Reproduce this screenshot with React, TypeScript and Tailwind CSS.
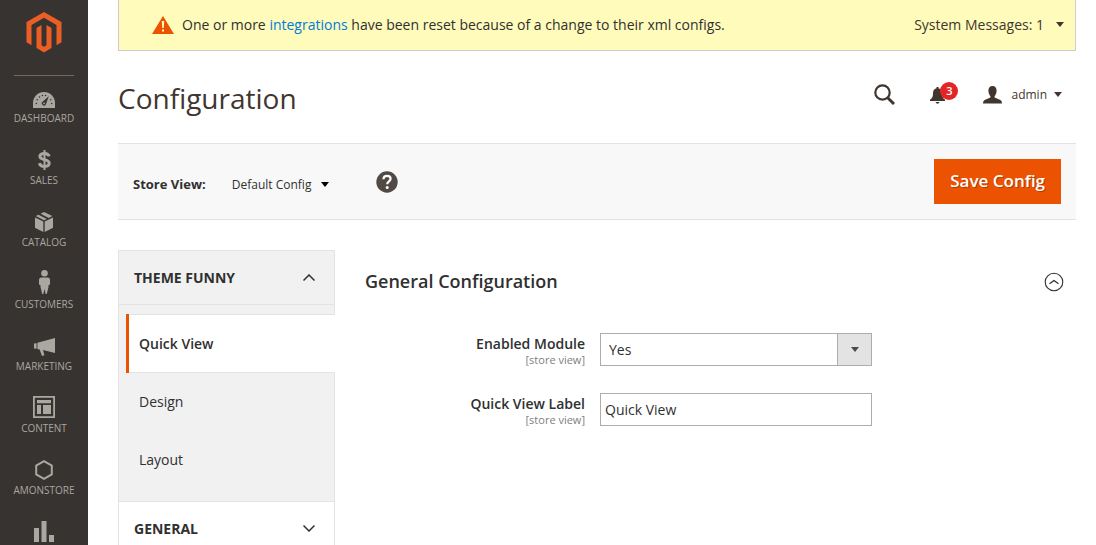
import React from "react";

type MenuItem = { label: string; icon: React.ReactNode; iconOnly?: boolean };

const menu: MenuItem[] = [
  {
    label: "Dashboard",
    icon: (
      <svg width="22" height="16" viewBox="0 0 22 16" fill="currentColor">
        <path d="M0 16V11A11 11 0 0 1 22 11V16Z" />
        <g fill="#373330">
          <circle cx="3.3" cy="11.5" r="0.8" />
          <circle cx="4.2" cy="7.8" r="0.8" />
          <circle cx="6.5" cy="5" r="0.8" />
          <circle cx="9.4" cy="3.5" r="0.8" />
          <circle cx="12.6" cy="3.5" r="0.8" />
          <circle cx="17.8" cy="7.8" r="0.8" />
          <circle cx="18.7" cy="11.5" r="0.8" />
          <path d="M15.8 4.2 12.9 12.2A2.1 2.1 0 1 1 9.6 9.8Z" />
        </g>
        <circle cx="11" cy="11.3" r="0.9" />
      </svg>
    ),
  },
  {
    label: "Sales",
    icon: (
      <svg width="13" height="20" viewBox="0 0 13 20" fill="none" stroke="currentColor">
        <path d="M11.2 6.4C10.6 4.4 8.9 3.5 6.5 3.5C3.7 3.5 1.9 4.7 1.9 6.6C1.9 10.7 11.2 8.6 11.2 13.1C11.2 15.4 9.3 16.5 6.6 16.5C3.8 16.5 2 15.4 1.4 13.1" strokeWidth="3" />
        <path d="M6.5 0V20" strokeWidth="2" />
      </svg>
    ),
  },
  {
    label: "Catalog",
    icon: (
      <svg width="18" height="20" viewBox="0 0 18 20" fill="currentColor">
        <path d="M0 5.6 8.3 9.5V20L0 15.8Z" />
        <path d="M18 5.6 9.7 9.5V20L18 15.8Z" />
        <path d="M0.8 4.1 3.5 2.8 11.8 6.9 9 8.3Z" />
        <path d="M5.6 1.8 9 0 17.3 4.1 13.8 5.9Z" />
      </svg>
    ),
  },
  {
    label: "Customers",
    icon: (
      <svg width="11" height="24" viewBox="0 0 11 24" fill="currentColor">
        <circle cx="5.5" cy="3.3" r="3.3" />
        <path d="M2.5 7.5H8.5Q11 7.5 11 10V14.5L9.5 15.3V17L7.8 24H6.6L5.5 19L4.4 24H3.2L1.5 17V15.3L0 14.5V10Q0 7.5 2.5 7.5Z" />
      </svg>
    ),
  },
  {
    label: "Marketing",
    icon: (
      <svg width="21" height="18" viewBox="0 0 21 18" fill="currentColor">
        <path d="M0 5.4H2.6V10.6H0Z" />
        <path d="M3.4 4.7 21 0V15L9 12L10.4 17.2L8 18L5.6 11.4L3.4 11Z" />
      </svg>
    ),
  },
  {
    label: "Content",
    icon: (
      <svg width="22" height="22" viewBox="0 0 22 22" fill="currentColor">
        <path fillRule="evenodd" d="M0 0H22V22H0ZM1.8 1.8V20.2H20.2V1.8Z" />
        <path d="M4 4H18V7.3H4ZM4 9H8V18H4ZM10 9H18V18H10Z" />
      </svg>
    ),
  },
  {
    label: "Amonstore",
    icon: (
      <svg width="18" height="20" viewBox="0 0 18 20" fill="none" stroke="currentColor" strokeWidth="2">
        <path d="M9 1.2 16.8 5.6V14.4L9 18.8 1.2 14.4V5.6Z" />
      </svg>
    ),
  },
  {
    label: "Reports",
    iconOnly: true,
    icon: (
      <svg width="20" height="21" viewBox="0 0 20 21" fill="currentColor">
        <path d="M0 7H5V21H0ZM7.5 0H12.5V21H7.5ZM15 14H20V21H15Z" />
      </svg>
    ),
  },
];

function Caret({ className = "" }: { className?: string }) {
  return (
    <svg className={className} width="8" height="5" viewBox="0 0 8 5" fill="currentColor" aria-hidden="true">
      <path d="M0 0H8L4 5Z" />
    </svg>
  );
}

function Chevron({ up = false }: { up?: boolean }) {
  return (
    <svg width="12" height="7" viewBox="0 0 12 7" fill="none" stroke="currentColor" strokeWidth="1.5" aria-hidden="true">
      <path d={up ? "M0.5 6.5 6 1 11.5 6.5" : "M0.5 0.5 6 6 11.5 0.5"} />
    </svg>
  );
}

function Sidebar() {
  return (
    <aside className="w-[88px] shrink-0 bg-[#373330] text-[#aaa6a0]">
      <a href="#" aria-label="Home" className="mx-[14px] flex h-[76px] justify-center border-b border-[#736963] pt-3">
        <svg width="36" height="41" viewBox="0 0 36 41" fill="#eb5e26">
          <path d="M18 0 35.5 10.1V30.3L30.5 33.2V13L18 5.8 5.5 13V33.2L0.5 30.3V10.1Z" />
          <path d="M10.5 15.9 15.5 13V33.2L18 34.7 20.5 33.2V13L25.5 15.9V36.1L18 40.5 10.5 36.1Z" />
        </svg>
      </a>
      <nav className="pt-[7px]">
        <ul>
          {menu.map((item) => (
            <li key={item.label}>
              <a
                href="#"
                aria-label={item.label}
                className={item.iconOnly ? "flex h-[25px] items-end justify-center" : "flex h-[62px] flex-col items-center"}
              >
                <span className={item.iconOnly ? "" : "flex h-[27px] items-end pb-[2px]"}>{item.icon}</span>
                {!item.iconOnly && <span className="text-[10px] leading-4 uppercase">{item.label}</span>}
              </a>
            </li>
          ))}
        </ul>
      </nav>
    </aside>
  );
}

function SystemMessages() {
  return (
    <div className="flex h-[51px] items-center border border-t-0 border-[#ccc] bg-[#fffbbb] pr-[11px] pl-[33px] text-[14px]">
      <svg className="mr-2 shrink-0" width="22" height="18" viewBox="0 0 22 18" aria-hidden="true">
        <path d="M11 0 22 18H0Z" fill="#eb5202" />
        <path d="M9.8 5H12.2L11.8 12H10.2ZM10 13.4H12V15.4H10Z" fill="#fffbbb" />
      </svg>
      <p className="grow pb-[2px]">
        One or more{" "}
        <a href="#" className="text-[#007bdb]">
          integrations
        </a>{" "}
        have been reset because of a change to their xml configs.
      </p>
      <button type="button" className="flex items-center gap-3 pb-[2px] text-[#41362f]">
        System Messages: 1
        <Caret />
      </button>
    </div>
  );
}

function PageHeader() {
  return (
    <header className="flex h-[92px] items-center justify-between pr-[14px] text-[#41362f]">
      <h1 className="pt-[2px] text-[28px] leading-9">Configuration</h1>
      <div className="flex items-center pb-[5px]">
        <button type="button" aria-label="Search" className="mr-[35px]">
          <svg width="21" height="21" viewBox="0 0 21 21" fill="none" stroke="currentColor">
            <circle cx="8.5" cy="8.5" r="7.2" strokeWidth="2.2" />
            <path d="M13.7 13.7 20 20" strokeWidth="3" />
          </svg>
        </button>
        <button type="button" aria-label="Notifications" className="relative mr-[38px] pt-[2px]">
          <svg width="15" height="17" viewBox="0 0 15 17" fill="currentColor">
            <path d="M6.5 0H8.5V1.2C11 1.8 12 3.8 12 6.2C12 9.5 12.6 11 15 12.8V14H0V12.8C2.4 11 3 9.5 3 6.2C3 3.8 4 1.8 6.5 1.2ZM5.5 15H9.5Q9 16.8 7.5 16.8Q6 16.8 5.5 15Z" />
          </svg>
          <span className="absolute -top-[3px] left-[10px] flex h-[18px] w-[18px] items-center justify-center rounded-full bg-[#e22626] text-[11px] font-semibold text-white">
            3
          </span>
        </button>
        <button type="button" className="flex items-center text-[12px]">
          <svg className="mr-[9px]" width="19" height="18" viewBox="0 0 19 18" fill="currentColor">
            <path d="M9.5 0C12.3 0 13.8 2 13.6 5C13.4 7.6 12.6 9 11.6 10.2V11.6L17.4 14Q19 14.8 19 17.5H0Q0 14.8 1.6 14L7.4 11.6V10.2C6.4 9 5.6 7.6 5.4 5C5.2 2 6.7 0 9.5 0Z" />
          </svg>
          admin
          <Caret className="ml-[7px]" />
        </button>
      </div>
    </header>
  );
}

function Toolbar() {
  return (
    <div className="flex h-[77px] items-center border-y border-[#e3e3e3] bg-[#f8f8f8] px-[15px]">
      <span className="mr-[26px] pt-[6px] text-[13px] font-bold">Store View:</span>
      <button type="button" className="mr-[47px] flex items-center gap-[10px] pt-[6px] text-[12px]">
        Default Config
        <Caret className="text-black" />
      </button>
      <a href="#" aria-label="Help">
        <svg width="22" height="22" viewBox="0 0 22 22">
          <circle cx="11" cy="11" r="10.7" fill="#514943" />
          <path d="M7.4 8.2C7.5 5.9 9 4.8 11.1 4.8C13.2 4.8 14.6 6 14.6 7.8C14.6 10.3 11.2 10.3 11.2 13.2" fill="none" stroke="#fff" strokeWidth="2.2" />
          <circle cx="11.2" cy="16.4" r="1.5" fill="#fff" />
        </svg>
      </a>
      <button
        type="button"
        className="ml-auto h-[45px] bg-[#eb5202] px-4 pb-[2px] text-[17px] font-semibold text-white [text-shadow:1px_1px_0_rgba(0,0,0,0.25)]"
      >
        Save Config
      </button>
    </div>
  );
}

function ConfigNav() {
  return (
    <nav className="w-[217px] shrink-0 border border-b-0 border-[#e3e3e3] text-[14px]">
      <div className="bg-[#f1f1f1]">
        <button type="button" className="flex h-[54px] w-full items-center justify-between border-b border-[#e3e3e3] pr-[19px] pl-[15px] font-bold uppercase">
          Theme Funny
          <Chevron up />
        </button>
        <ul className="pt-[9px] pb-[13px]">
          <li className="-mb-px">
            <a href="#" className="-mr-px ml-[7px] flex h-[59px] items-center border-l-[3px] border-[#eb5202] bg-white font-semibold">
              <span className="flex h-full grow items-center border-y border-[#e3e3e3] pl-[10px]">Quick View</span>
            </a>
          </li>
          <li>
            <a href="#" className="flex h-[58px] items-center pl-5">Design</a>
          </li>
          <li>
            <a href="#" className="flex h-[58px] items-center pl-5">Layout</a>
          </li>
        </ul>
      </div>
      <button type="button" className="flex h-[53px] w-full items-center justify-between border-t border-[#e3e3e3] bg-white pr-[19px] pl-[15px] font-bold uppercase">
        General
        <Chevron />
      </button>
    </nav>
  );
}

function Field({ id, label, children }: { id: string; label: string; children: React.ReactNode }) {
  return (
    <div className="flex gap-[15px]">
      <label htmlFor={id} className="flex w-[220px] shrink-0 flex-col text-right">
        <span className="text-[14px] leading-[21px] font-semibold">{label}</span>
        <span className="text-[11px] leading-[11px] text-[#808080]">[store view]</span>
      </label>
      {children}
    </div>
  );
}

function ConfigForm() {
  return (
    <section className="grow pl-[30px]">
      <div className="flex h-[62px] items-center justify-between pr-[12px]">
        <h2 className="text-[18px] font-semibold">General Configuration</h2>
        <button type="button" aria-label="Collapse section" className="pt-[2px]">
          <svg width="20" height="20" viewBox="0 0 20 20" fill="none" stroke="currentColor">
            <circle cx="10" cy="10" r="8.8" strokeWidth="1.1" />
            <path d="M5.5 11.8 10 8.4 14.5 11.8" strokeWidth="1.2" />
          </svg>
        </button>
      </div>
      <form className="flex flex-col gap-[27px] pt-[21px] text-[14px]">
        <Field id="enabled" label="Enabled Module">
          <div className="relative h-[33px] w-[272px]">
            <select id="enabled" defaultValue="Yes" className="h-full w-full appearance-none border border-[#adadad] bg-white pl-2">
              <option>Yes</option>
              <option>No</option>
            </select>
            <span className="pointer-events-none absolute inset-y-0 right-0 flex w-[35px] items-center justify-center border border-[#adadad] bg-[#e3e3e3] text-[#514943]">
              <Caret />
            </span>
          </div>
        </Field>
        <Field id="quick-view-label" label="Quick View Label">
          <input id="quick-view-label" type="text" defaultValue="Quick View" className="h-[33px] w-[272px] border border-[#adadad] bg-white px-1" />
        </Field>
      </form>
    </section>
  );
}

export default function App() {
  return (
    <div className="flex min-h-screen bg-white font-['Open_Sans',sans-serif] text-[#303030]">
      <Sidebar />
      <main className="min-w-0 grow pr-5 pl-[30px]">
        <SystemMessages />
        <PageHeader />
        <Toolbar />
        <div className="flex pt-[30px]">
          <ConfigNav />
          <ConfigForm />
        </div>
      </main>
    </div>
  );
}
